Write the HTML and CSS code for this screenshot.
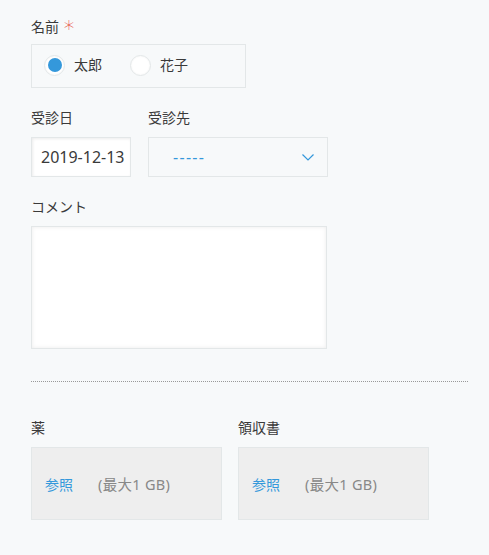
FILE: index.html
```html
<!DOCTYPE html>
<html lang="ja">
<head>
    <meta charset="UTF-8">
    <meta name="viewport" content="width=device-width, initial-scale=1.0">
    <title>受診記録</title>
    <link rel="stylesheet" href="styles.css">
</head>
<body>
    <form class="record-form">
        <div class="field">
            <div class="field-label">名前 <span class="required">*</span></div>
            <div class="radio-group">
                <label class="radio-item">
                    <input type="radio" name="name" checked>
                    <span>太郎</span>
                </label>
                <label class="radio-item">
                    <input type="radio" name="name">
                    <span>花子</span>
                </label>
            </div>
        </div>

        <div class="field-row">
            <div class="field">
                <div class="field-label">受診日</div>
                <input type="text" class="date-input" value="2019-12-13">
            </div>
            <div class="field">
                <div class="field-label">受診先</div>
                <div class="select-box">
                    <span class="select-value">-----</span>
                    <svg class="chevron" width="12" height="7" viewBox="0 0 12 7">
                        <polyline points="0.5,0.5 6,6 11.5,0.5" fill="none" stroke="#3498db" stroke-width="1.2"/>
                    </svg>
                </div>
            </div>
        </div>

        <div class="field">
            <div class="field-label">コメント</div>
            <textarea class="comment"></textarea>
        </div>

        <hr class="divider">

        <div class="field-row file-row">
            <div class="field">
                <div class="field-label">薬</div>
                <div class="file-box">
                    <a class="file-link">参照</a>
                    <span class="file-limit">(最大1 GB)</span>
                </div>
            </div>
            <div class="field">
                <div class="field-label">領収書</div>
                <div class="file-box">
                    <a class="file-link">参照</a>
                    <span class="file-limit">(最大1 GB)</span>
                </div>
            </div>
        </div>
    </form>
</body>
</html>
```

FILE: styles.css
```css
body {
    margin: 0;
    padding: 0;
    background-color: #f7f9fa;
    font-family: "Noto Sans", "Noto Sans CJK JP", sans-serif;
    font-size: 14px;
    color: #3a3a3a;
}

.record-form {
    padding: 15px 21px 0 31px;
}

.field {
    margin-bottom: 20px;
}

.field-label {
    line-height: 20px;
    height: 20px;
    margin-bottom: 9px;
}

.required {
    color: #e74c3c;
    font-family: "DejaVu Sans", sans-serif;
    font-size: 21px;
    font-weight: 300;
    position: relative;
    top: 4px;
    margin-left: 1px;
}

.radio-group {
    display: flex;
    align-items: center;
    gap: 28px;
    box-sizing: border-box;
    width: 215px;
    height: 44px;
    padding: 0 0 0 12px;
    border: 1px solid #e3e7e8;
}

.radio-item {
    display: flex;
    align-items: center;
    gap: 9px;
    line-height: 20px;
    margin-top: -2px;
}

.radio-item input {
    appearance: none;
    margin: 0;
    width: 21px;
    height: 21px;
    border-radius: 50%;
    border: 1px solid #e3e7e8;
    background-color: #fff;
    box-shadow: inset 0 0 2px rgba(0, 0, 0, 0.06);
    position: relative;
}

.radio-item input:checked::after {
    content: "";
    position: absolute;
    left: 2.5px;
    top: 2.5px;
    width: 14px;
    height: 14px;
    border-radius: 50%;
    background-color: #3498db;
}

.field-row {
    display: flex;
    gap: 17px;
}

.date-input {
    width: 100px;
    height: 40px;
    box-sizing: border-box;
    margin: 0;
    padding: 0 0 0 9px;
    border: 1px solid #e3e7e8;
    background-color: #fff;
    box-shadow: inset 1px 1px 3px rgba(0, 0, 0, 0.08);
    font-family: "Noto Sans", "Noto Sans CJK JP", sans-serif;
    font-size: 16px;
    color: #3a3a3a;
    outline: none;
}

.select-box {
    display: flex;
    align-items: center;
    justify-content: space-between;
    width: 180px;
    height: 40px;
    box-sizing: border-box;
    padding: 0 13px 0 24px;
    border: 1px solid #e3e7e8;
    background-color: #f7f9fa;
}

.select-value {
    color: #3498db;
    font-size: 16px;
    letter-spacing: 1.3px;
}

.chevron {
    display: block;
    margin-top: 1px;
}

.comment {
    display: block;
    width: 296px;
    height: 123px;
    box-sizing: border-box;
    margin: 0;
    border: 1px solid #e3e7e8;
    background-color: #fff;
    box-shadow: inset 0 0 4px rgba(0, 0, 0, 0.08);
    resize: none;
    outline: none;
}

.divider {
    margin: 32px 0 36px 0;
    border: none;
    border-top: 1px dotted #999;
    height: 0;
}

.file-row {
    gap: 16px;
}

.file-box {
    display: flex;
    align-items: center;
    gap: 25px;
    width: 191px;
    height: 73px;
    box-sizing: border-box;
    padding-left: 13px;
    border: 1px solid #e3e7e8;
    background-color: #eee;
}

.file-link {
    color: #3498db;
}

.file-limit {
    color: #888;
    font-size: 14.5px;
    letter-spacing: 0.3px;
}
```
